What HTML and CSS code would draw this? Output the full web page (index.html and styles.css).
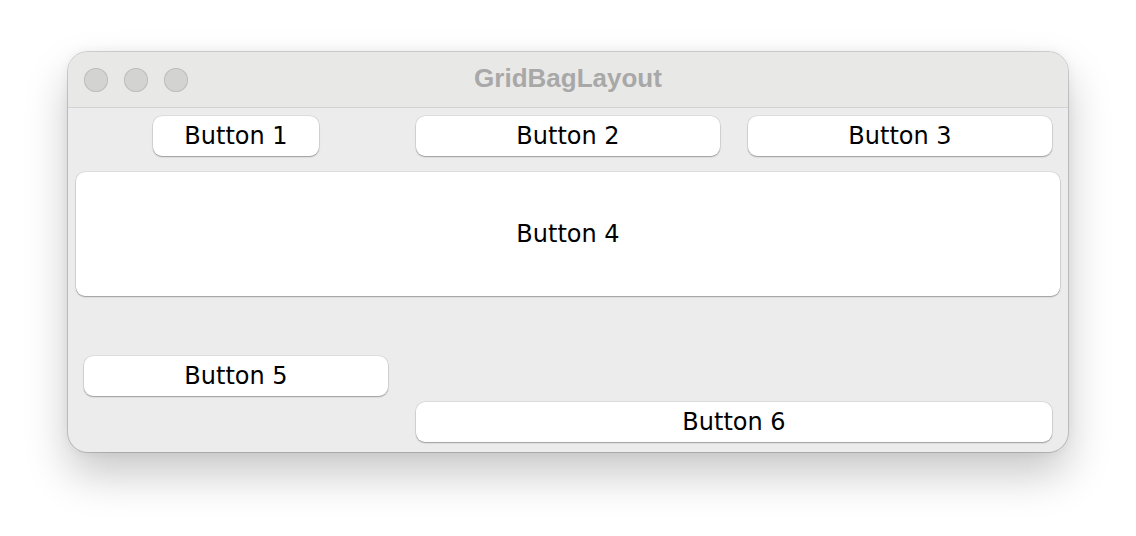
FILE: index.html
```html
<!DOCTYPE html>
<html>
<head>
<meta charset="utf-8">
<link rel="stylesheet" href="styles.css">
</head>
<body>
<div class="window">
  <div class="titlebar">
    <div class="lights">
      <span class="light"></span>
      <span class="light"></span>
      <span class="light"></span>
    </div>
    <div class="title">GridBagLayout</div>
  </div>
  <div class="content">
    <button class="btn b1">Button 1</button>
    <button class="btn b2">Button 2</button>
    <button class="btn b3">Button 3</button>
    <button class="btn b4">Button 4</button>
    <button class="btn b5">Button 5</button>
    <button class="btn b6">Button 6</button>
  </div>
</div>
</body>
</html>
```

FILE: styles.css
```css
html, body {
  margin: 0;
  background: #ffffff;
}
body {
  padding: 52px 68px;
  width: 1136px;
  height: 536px;
  box-sizing: border-box;
  overflow: hidden;
}
.window {
  width: 1000px;
  height: 400px;
  box-sizing: border-box;
  border-radius: 20px;
  background: #ececec;
  box-shadow: 0 0 0 1px rgba(0,0,0,0.16), 0 22px 44px rgba(0,0,0,0.22), 0 0 12px rgba(0,0,0,0.06);
  overflow: hidden;
  display: flex;
  flex-direction: column;
}
.titlebar {
  height: 56px;
  flex: none;
  background: #e8e8e7;
  border-bottom: 1px solid #d2d2d2;
  box-sizing: border-box;
  display: flex;
  align-items: center;
  position: relative;
}
.lights {
  display: flex;
  gap: 16px;
  padding-left: 16px;
}
.light {
  width: 24px;
  height: 24px;
  border-radius: 50%;
  background: #d3d3d2;
  box-shadow: inset 0 0 0 1px #bdbdbc;
}
.title {
  position: absolute;
  left: 0;
  right: 0;
  top: 0;
  bottom: 0;
  display: flex;
  align-items: center;
  justify-content: center;
  font-family: "Liberation Sans", Arial, sans-serif;
  font-weight: bold;
  font-size: 26px;
  color: #a8a8a8;
  padding-bottom: 2px;
}
.content {
  flex: 1;
  padding: 8px 8px 0 8px;
  display: grid;
  grid-template-columns: 320px 344px 320px;
  grid-template-rows: 40px 124px 40px 40px;
  align-content: start;
}
.btn {
  font-family: "DejaVu Sans", Verdana, sans-serif;
  font-size: 24px;
  color: #000;
  background: #ffffff;
  border: none;
  border-radius: 9px;
  box-shadow: 0 0 0 0.5px rgba(0,0,0,0.12), 0 1px 1.5px rgba(0,0,0,0.3);
  padding: 0;
  margin: 0;
  height: 40px;
  display: flex;
  align-items: center;
  justify-content: center;
}
.b1 {
  grid-column: 1;
  grid-row: 1;
  width: 166px;
  justify-self: center;
}
.b2 {
  grid-column: 2;
  grid-row: 1;
  margin: 0 20px;
}
.b3 {
  grid-column: 3;
  grid-row: 1;
  margin: 0 8px;
}
.b4 {
  grid-column: 1 / 4;
  grid-row: 2;
  height: 124px;
  margin-top: 16px;
}
.b5 {
  grid-column: 1;
  grid-row: 3;
  margin: 76px 8px 0 8px;
}
.b6 {
  grid-column: 2 / 4;
  grid-row: 4;
  margin: 82px 8px 0 20px;
}
```
